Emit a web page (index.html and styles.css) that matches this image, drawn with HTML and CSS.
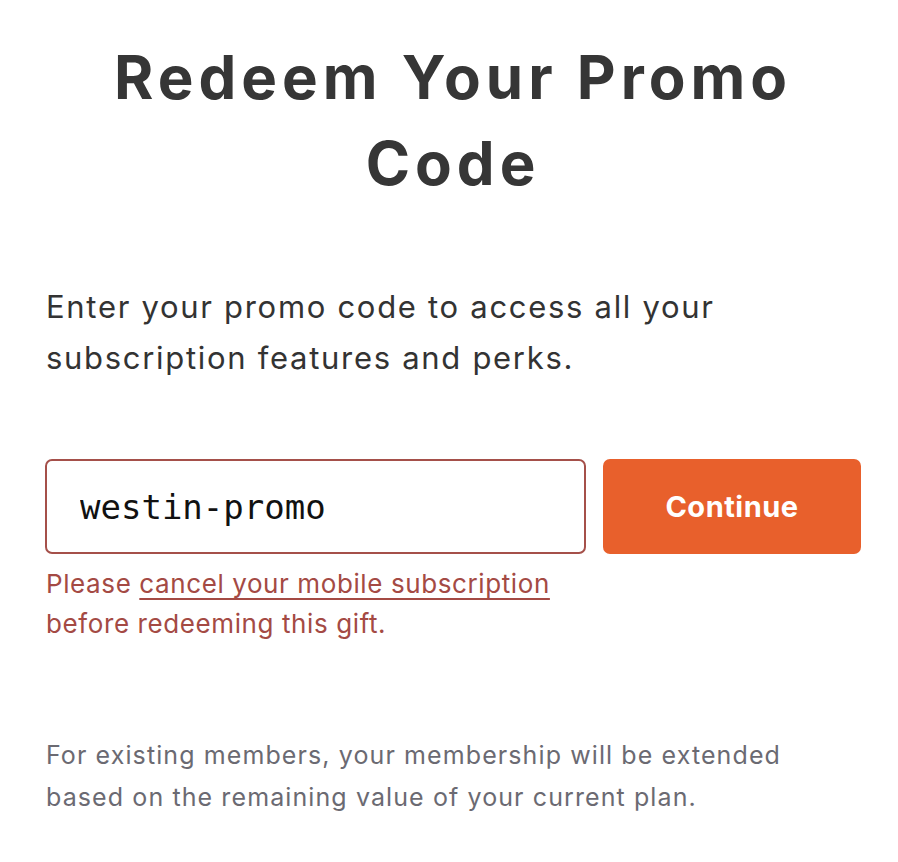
FILE: index.html
```html
<!DOCTYPE html>
<html lang="en">
<head>
<meta charset="utf-8">
<title>Redeem Your Promo Code</title>
<link rel="stylesheet" href="styles.css">
</head>
<body>
<main class="page">
  <h1 class="title">Redeem Your Promo Code</h1>
  <p class="intro">Enter your promo code to access all your subscription features and perks.</p>
  <form class="redeem">
    <input class="code-input" type="text" value="westin-promo" aria-label="Promo code">
    <button class="continue" type="button">Continue</button>
  </form>
  <p class="error">Please <a href="#" class="error-link">cancel your mobile subscription</a> before redeeming this gift.</p>
  <p class="note">For existing members, your membership will be extended based on the remaining value of your current plan.</p>
</main>
</body>
</html>
```

FILE: styles.css
```css
* { box-sizing: border-box; }
html, body { margin: 0; padding: 0; background: #ffffff; }
body { font-family: Inter, "Liberation Sans", sans-serif; color: #333333; }

.page {
  width: 816px;
  margin-left: 45px;
  padding-top: 34px;
}

.title {
  margin: 0;
  text-align: center;
  font-size: 60px;
  line-height: 86px;
  font-weight: 700;
  letter-spacing: 5px;
  color: #363636;
}

.intro {
  margin: 75px 0 0 1px;
  width: 720px;
  font-size: 31px;
  line-height: 51px;
  letter-spacing: 1.7px;
  color: #333333;
}

.redeem {
  display: flex;
  gap: 17px;
  margin-top: 76px;
}

.code-input {
  width: 541px;
  height: 95px;
  border: 2px solid #a5504a;
  border-radius: 7px;
  padding: 0 0 0 33px;
  font-family: "DejaVu Sans Mono", "Liberation Mono", monospace;
  font-size: 34px;
  color: #111111;
  background: #fff;
  outline: none;
}

.continue {
  width: 258px;
  height: 95px;
  border: none;
  border-radius: 7px;
  background: #e8602c;
  color: #ffffff;
  font-family: Inter, "Liberation Sans", sans-serif;
  font-size: 29px;
  font-weight: 700;
  letter-spacing: 0.5px;
  cursor: pointer;
}

.error {
  margin: 10px 0 0 1px;
  width: 570px;
  font-size: 26px;
  line-height: 40px;
  letter-spacing: 0.6px;
  color: #a44a44;
}

.error-link { color: inherit; text-decoration: underline; text-underline-offset: 5px; text-decoration-thickness: 1.5px; }

.note {
  margin: 90px 0 0 1px;
  width: 770px;
  font-size: 25px;
  line-height: 42px;
  letter-spacing: 1.1px;
  color: #6b6a72;
}
```
